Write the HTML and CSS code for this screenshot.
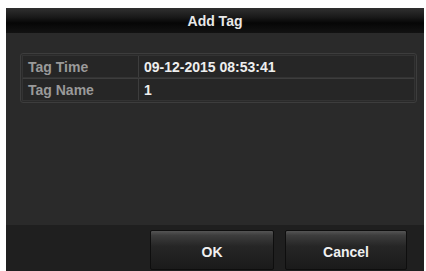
FILE: index.html
```html
<!DOCTYPE html>
<html lang="en">
    <head>
        <meta charset="UTF-8" />
        <title>Add Tag</title>
        <link rel="stylesheet" href="styles.css">
    </head>
    <body>
        <div class="dialog">
            <div class="dialog-title">Add Tag</div>

            <div class="dialog-body">
                <div class="tag-table">
                    <div class="tag-row">
                        <div class="tag-label">Tag Time</div>
                        <div class="tag-value">09-12-2015 08:53:41</div>
                    </div>
                    <div class="tag-row">
                        <div class="tag-label">Tag Name</div>
                        <div class="tag-value">1</div>
                    </div>
                </div>
            </div>

            <div class="dialog-footer">
                <button class="btn btn-ok">OK</button>
                <button class="btn btn-cancel">Cancel</button>
            </div>
        </div>
    </body>
</html>
```

FILE: styles.css
```css
:root {
    --body-color: #2a2a2a;
    --footer-color: #1f1f1f;
    --row-color: #262626;
    --line-color: #3d3d3d;
    --label-color: #9a9a9a;
}

body {
    margin: 0;
    background-color: #ffffff;
    font-family: 'Liberation Sans', Arial, sans-serif;
    overflow: hidden;
}

.dialog {
    margin: 8px 2px 0 6px;
    height: 263px;
    background-color: var(--body-color);
    display: flex;
    flex-direction: column;
}

.dialog-title {
    height: 25px;
    line-height: 26px;
    text-align: center;
    color: #e8e8e8;
    font-size: 14px;
    font-weight: bold;
    background: linear-gradient(to bottom, #303030 0%, #1a1a1a 35%, #060606 60%, #121212 100%);
}

.dialog-body {
    flex: 1;
    padding: 20px 7px 0 14px;
}

.tag-table {
    border: 1px solid var(--line-color);
    border-radius: 3px;
    padding: 1px;
}

.tag-row {
    display: flex;
    height: 21px;
    line-height: 22px;
    font-size: 14px;
    background-color: var(--row-color);
    border: 1px solid #333333;
}

.tag-row + .tag-row {
    border-top-color: var(--line-color);
}

.tag-label {
    width: 110px;
    padding-left: 5px;
    color: var(--label-color);
    font-weight: bold;
    border-right: 1px solid var(--line-color);
}

.tag-value {
    flex: 1;
    padding-left: 5px;
    color: #eeeeee;
    font-weight: bold;
}

.dialog-footer {
    height: 41px;
    background-color: var(--footer-color);
    display: flex;
    justify-content: flex-end;
    align-items: flex-start;
    gap: 11px;
    padding: 5px 17px 0 0;
}

.btn {
    height: 40px;
    border: 1px solid #0e0e0e;
    border-radius: 2px;
    background: linear-gradient(to bottom, #555555 0%, #3c3c3c 12%, #262626 40%, #1a1a1a 100%);
    color: #f0f0f0;
    font-family: 'Liberation Sans', Arial, sans-serif;
    font-size: 14px;
    font-weight: bold;
    padding: 4px 0 0 0;
}

.btn-ok {
    width: 124px;
}

.btn-cancel {
    width: 122px;
}
```
